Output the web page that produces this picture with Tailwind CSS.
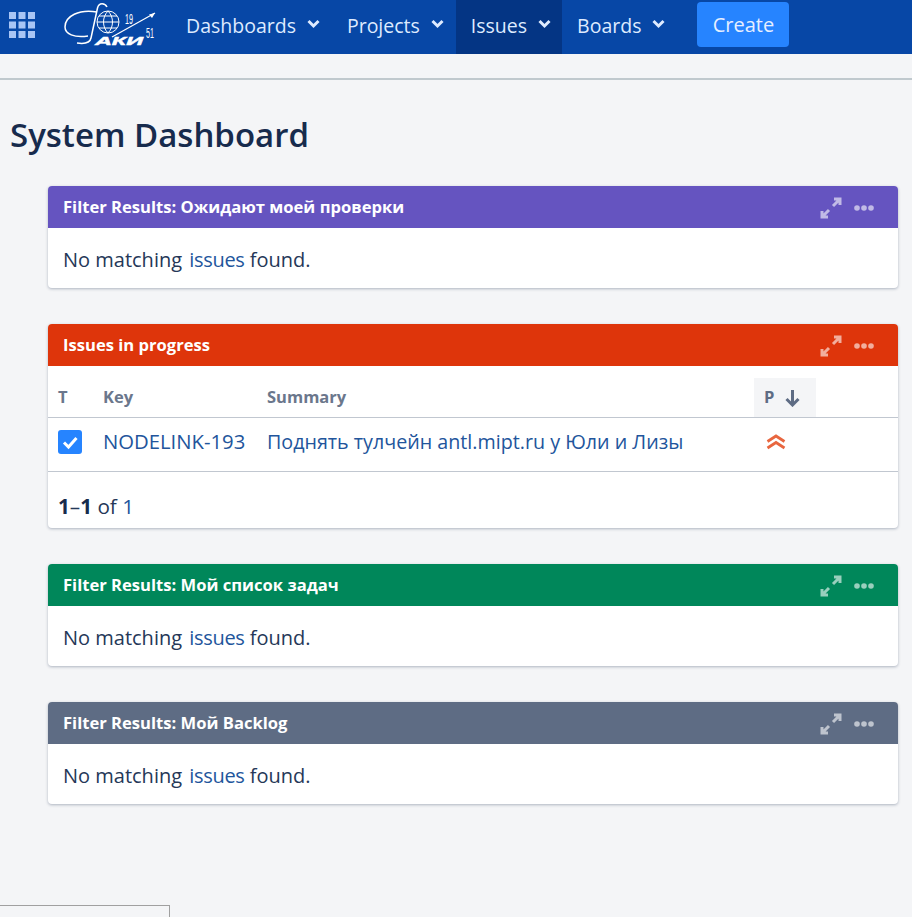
<!DOCTYPE html>
<html lang="en">
<head>
    <meta charset="UTF-8">
    <title>System Dashboard</title>
    <script src="https://cdn.jsdelivr.net/npm/@tailwindcss/browser@4"></script>
</head>
<body class="relative h-[917px] overflow-hidden bg-[#f4f5f7] font-['Open_Sans',sans-serif] text-[#253858]">

    <!-- Top nav -->
    <nav class="flex h-[54px] items-stretch bg-[#0747a6] text-[19.5px] text-[#deebff]">
        <svg class="ml-[9px] mt-[12px] h-[26px] w-[26px]" viewBox="0 0 26 26" fill="#a9c5f5">
            <rect x="0" y="0" width="7" height="7"/><rect x="9.5" y="0" width="7" height="7"/><rect x="19" y="0" width="7" height="7"/>
            <rect x="0" y="9.5" width="7" height="7"/><rect x="9.5" y="9.5" width="7" height="7"/><rect x="19" y="9.5" width="7" height="7"/>
            <rect x="0" y="19" width="7" height="7"/><rect x="9.5" y="19" width="7" height="7"/><rect x="19" y="19" width="7" height="7"/>
        </svg>
        <!-- logo -->
        <svg class="ml-[29px] mt-[2px] h-[46px] w-[100px]" viewBox="0 0 100 46" fill="none" stroke="#fff" stroke-width="1.5">
            <path d="M43 5C41 1 35 0 33.5 6L27 36C26 41 20 42 13 41"/>
            <path d="M33 10C15 7 1 14 1 25C1 32 10 36 24 34"/>
            <circle cx="44" cy="20" r="11" stroke-width="1"/>
            <path d="M44 9C38 15 38 25 44 31M44 9C50 15 50 25 44 31M33 20H55M35 14H53M35 26H53" stroke-width="1"/>
            <path d="M48 35L91 11" stroke-width="1.2"/>
            <path d="M91 11L85 12.5L88 16Z" fill="#fff" stroke="none"/>
            <text x="61" y="22" fill="#fff" stroke="none" font-family="Liberation Sans" font-size="14" textLength="8" lengthAdjust="spacingAndGlyphs">19</text>
            <text x="82" y="36" fill="#fff" stroke="none" font-family="Liberation Sans" font-size="14" textLength="8" lengthAdjust="spacingAndGlyphs">51</text>
            <text x="31" y="43" fill="#fff" stroke="#fff" stroke-width="0.4" font-family="Liberation Sans" font-size="10" font-weight="700" font-style="italic" textLength="48" lengthAdjust="spacingAndGlyphs">АКИ</text>
        </svg>
        <a class="ml-[22px] flex items-center pb-[3px]">Dashboards
            <svg class="ml-[11px] mb-[3px] h-[10px] w-[13px]" viewBox="0 0 13 10" fill="none" stroke="#deebff" stroke-width="3"><path d="M1.5 2L6.5 7L11.5 2"/></svg>
        </a>
        <a class="ml-[27px] flex items-center pb-[3px]">Projects
            <svg class="ml-[11px] mb-[3px] h-[10px] w-[13px]" viewBox="0 0 13 10" fill="none" stroke="#deebff" stroke-width="3"><path d="M1.5 2L6.5 7L11.5 2"/></svg>
        </a>
        <a class="ml-[12px] flex items-center bg-[#043584] pb-[3px] pl-[15px] pr-[11px]">Issues
            <svg class="ml-[11px] mb-[3px] h-[10px] w-[13px]" viewBox="0 0 13 10" fill="none" stroke="#deebff" stroke-width="3"><path d="M1.5 2L6.5 7L11.5 2"/></svg>
        </a>
        <a class="ml-[15px] flex items-center pb-[3px]">Boards
            <svg class="ml-[11px] mb-[3px] h-[10px] w-[13px]" viewBox="0 0 13 10" fill="none" stroke="#deebff" stroke-width="3"><path d="M1.5 2L6.5 7L11.5 2"/></svg>
        </a>
        <a class="ml-[32px] mt-[2px] flex h-[45px] w-[92px] items-center justify-center rounded-[4px] bg-[#2684ff] text-[20px] text-[#e6efff]">Create</a>
    </nav>

    <div class="mt-[24px] h-[2px] bg-[#c0c9ce]"></div>

    <h1 class="ml-[10px] mt-[30px] text-[33px] leading-[50px] font-semibold text-[#172b4d]">System Dashboard</h1>

    <div class="ml-[48px] mt-[26px] w-[850px] space-y-[36px] text-[20px]">

        <!-- Gadget 1 -->
        <section class="rounded-[4px] bg-white shadow-[0_1px_3px_rgba(9,30,66,0.3)]">
            <header class="flex h-[42px] items-center rounded-t-[4px] bg-[#6554c0] pl-[15px] pr-[24px] pt-[1px] text-white">
                <h2 class="text-[16.6px] font-bold">Filter Results: Ожидают моей проверки</h2>
                <svg class="ml-auto h-[22px] w-[22px]" viewBox="0 0 22 22" fill="none" stroke="#fff" stroke-opacity="0.6" stroke-width="3"><path d="M13 9L20 2M14 2H20V8M9 13L2 20M8 20H2V14"/></svg>
                <svg class="ml-[12px] h-[6px] w-[20px]" viewBox="0 0 20 6" fill="#fff" fill-opacity="0.6"><circle cx="3" cy="3" r="2.8"/><circle cx="10" cy="3" r="2.8"/><circle cx="17" cy="3" r="2.8"/></svg>
            </header>
            <p class="flex h-[60px] items-center pl-[15px] pt-[4px]">No matching&nbsp;<a class="ml-[2px] tracking-[-0.3px] text-[#22559c]">issues</a>&nbsp;found.</p>
        </section>

        <!-- Gadget 2 -->
        <section class="rounded-[4px] bg-white shadow-[0_1px_3px_rgba(9,30,66,0.3)]">
            <header class="flex h-[42px] items-center rounded-t-[4px] bg-[#de350b] pl-[15px] pr-[24px] pt-[1px] text-white">
                <h2 class="text-[16.6px] font-bold">Issues in progress</h2>
                <svg class="ml-auto h-[22px] w-[22px]" viewBox="0 0 22 22" fill="none" stroke="#fff" stroke-opacity="0.6" stroke-width="3"><path d="M13 9L20 2M14 2H20V8M9 13L2 20M8 20H2V14"/></svg>
                <svg class="ml-[12px] h-[6px] w-[20px]" viewBox="0 0 20 6" fill="#fff" fill-opacity="0.6"><circle cx="3" cy="3" r="2.8"/><circle cx="10" cy="3" r="2.8"/><circle cx="17" cy="3" r="2.8"/></svg>
            </header>
            <div class="flex h-[52px] items-end border-b border-[#c1c7d0] text-[16.5px] font-bold text-[#6b778c]">
                <span class="ml-[10px] w-[45px] pb-[7px]">T</span>
                <span class="w-[164px] pb-[7px]">Key</span>
                <span class="w-[487px] pb-[7px]">Summary</span>
                <span class="flex h-[39px] w-[62px] items-center bg-[#f4f5f7] pl-[10px] text-[#5e6c84]">P
                    <svg class="ml-[11px] h-[18px] w-[15px]" viewBox="0 0 15 18" fill="none" stroke="#5e6c84" stroke-width="3"><path d="M7.5 1V16M1.5 10L7.5 16L13.5 10"/></svg>
                </span>
            </div>
            <div class="flex h-[54px] items-center border-b border-[#c1c7d0] pb-[6px] text-[#22559c]">
                <svg class="ml-[10px] h-[24px] w-[24px]" viewBox="0 0 24 24"><rect width="24" height="24" rx="3" fill="#2684ff"/><path d="M6 12.5L10.5 17L18.5 8" fill="none" stroke="#fff" stroke-width="3"/></svg>
                <a class="ml-[21px] w-[164px] text-[20.3px]">NODELINK-193</a>
                <a class="w-[499px] text-[19.7px]">Поднять тулчейн antl.mipt.ru у Юли и Лизы</a>
                <svg class="h-[16px] w-[20px]" viewBox="0 0 20 16" fill="none" stroke="#e8663f" stroke-width="2.8"><path d="M1.5 7.5L10 2L18.5 7.5M1.5 14L10 8.5L18.5 14"/></svg>
            </div>
            <p class="flex h-[56px] items-center pl-[10px] pt-[14px] text-[20.7px]"><b class="font-bold text-[#172b4d]">1</b>–<b class="font-bold text-[#172b4d]">1</b>&nbsp;of&nbsp;<a class="text-[#22559c]">1</a></p>
        </section>

        <!-- Gadget 3 -->
        <section class="rounded-[4px] bg-white shadow-[0_1px_3px_rgba(9,30,66,0.3)]">
            <header class="flex h-[42px] items-center rounded-t-[4px] bg-[#00875a] pl-[15px] pr-[24px] pt-[1px] text-white">
                <h2 class="text-[16.6px] font-bold">Filter Results: Мой список задач</h2>
                <svg class="ml-auto h-[22px] w-[22px]" viewBox="0 0 22 22" fill="none" stroke="#fff" stroke-opacity="0.6" stroke-width="3"><path d="M13 9L20 2M14 2H20V8M9 13L2 20M8 20H2V14"/></svg>
                <svg class="ml-[12px] h-[6px] w-[20px]" viewBox="0 0 20 6" fill="#fff" fill-opacity="0.6"><circle cx="3" cy="3" r="2.8"/><circle cx="10" cy="3" r="2.8"/><circle cx="17" cy="3" r="2.8"/></svg>
            </header>
            <p class="flex h-[60px] items-center pl-[15px] pt-[4px]">No matching&nbsp;<a class="ml-[2px] tracking-[-0.3px] text-[#22559c]">issues</a>&nbsp;found.</p>
        </section>

        <!-- Gadget 4 -->
        <section class="rounded-[4px] bg-white shadow-[0_1px_3px_rgba(9,30,66,0.3)]">
            <header class="flex h-[42px] items-center rounded-t-[4px] bg-[#5e6c84] pl-[15px] pr-[24px] pt-[1px] text-white">
                <h2 class="text-[16.6px] font-bold">Filter Results: Мой Backlog</h2>
                <svg class="ml-auto h-[22px] w-[22px]" viewBox="0 0 22 22" fill="none" stroke="#fff" stroke-opacity="0.6" stroke-width="3"><path d="M13 9L20 2M14 2H20V8M9 13L2 20M8 20H2V14"/></svg>
                <svg class="ml-[12px] h-[6px] w-[20px]" viewBox="0 0 20 6" fill="#fff" fill-opacity="0.6"><circle cx="3" cy="3" r="2.8"/><circle cx="10" cy="3" r="2.8"/><circle cx="17" cy="3" r="2.8"/></svg>
            </header>
            <p class="flex h-[60px] items-center pl-[15px] pt-[4px]">No matching&nbsp;<a class="ml-[2px] tracking-[-0.3px] text-[#22559c]">issues</a>&nbsp;found.</p>
        </section>
    </div>

    <!-- Browser status bubble, cut off by the window edge -->
    <div class="absolute left-0 top-[905px] h-[12px] w-[170px] border-r border-t border-[#a0a0a0] bg-[#f4f5f7]"></div>
</body>
</html>
